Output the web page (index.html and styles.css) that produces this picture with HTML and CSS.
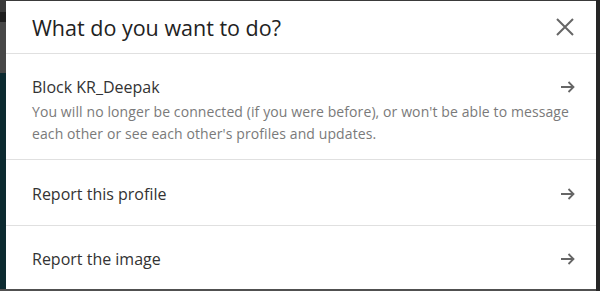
FILE: index.html
```html
<!DOCTYPE html>
<html>
<head>
<meta charset="utf-8">
<link rel="stylesheet" href="styles.css">
</head>
<body>
<div class="modal">
  <div class="header">
    <h2 class="title">What do you want to do?</h2>
    <button class="close" aria-label="Dismiss">
      <svg width="18" height="18" viewBox="0 0 18 18"><path d="M1 1 L17 17 M17 1 L1 17" stroke="#666" stroke-width="2" fill="none"/></svg>
    </button>
  </div>
  <ul class="options">
    <li class="option option-block">
      <div class="row">
        <div class="label">Block KR_Deepak</div>
        <svg class="arrow" width="14" height="12" viewBox="0 0 14 12"><path d="M0 6 H12.5 M7.5 1 L12.5 6 L7.5 11" stroke="#666" stroke-width="1.8" fill="none"/></svg>
      </div>
      <div class="desc">You will no longer be connected (if you were before), or won't be able to message each other or see each other's profiles and updates.</div>
    </li>
    <li class="option">
      <div class="row">
        <div class="label">Report this profile</div>
        <svg class="arrow" width="14" height="12" viewBox="0 0 14 12"><path d="M0 6 H12.5 M7.5 1 L12.5 6 L7.5 11" stroke="#666" stroke-width="1.8" fill="none"/></svg>
      </div>
    </li>
    <li class="option">
      <div class="row">
        <div class="label">Report the image</div>
        <svg class="arrow" width="14" height="12" viewBox="0 0 14 12"><path d="M0 6 H12.5 M7.5 1 L12.5 6 L7.5 11" stroke="#666" stroke-width="1.8" fill="none"/></svg>
      </div>
    </li>
  </ul>
</div>
</body>
</html>
```
FILE: styles.css
```css
html, body {
  margin: 0;
  padding: 0;
  height: 291px;
  overflow: hidden;
}
body {
  background:
    linear-gradient(to right, transparent 0, transparent 596px, #262626 596px),
    linear-gradient(to bottom, transparent 0, transparent 289px, #505050 289px),
    linear-gradient(to bottom, #3a3a3a 0, #3a3a3a 12px, #1e1e1e 12px, #1e1e1e 22px, #474747 22px, #474747 73px, #0c2a30 73px, #0c2a30 100%);
  font-family: "Open Sans", "Noto Sans", sans-serif;
  padding: 1px 4px 2px 6px;
  box-sizing: border-box;
}
.modal {
  background: #fff;
  width: 590px;
  height: 288px;
  overflow: hidden;
  display: flex;
  flex-direction: column;
}
.header {
  flex: none;
  height: 52px;
  border-bottom: 1px solid #e0e0e0;
  display: flex;
  align-items: center;
  justify-content: space-between;
  padding: 0 22px 0 26px;
}
.title {
  margin: 0;
  font-weight: 400;
  font-size: 21.5px;
  color: #222;
}
.close {
  border: 0;
  background: none;
  padding: 0;
  width: 18px;
  height: 18px;
  display: flex;
}
.options {
  flex: none;
  list-style: none;
  margin: 0;
  padding: 0;
}
.option {
  display: flex;
  flex-direction: column;
  justify-content: center;
  padding: 2px 21px 0 26px;
  height: 66px;
  box-sizing: border-box;
  border-bottom: 1px solid #e0e0e0;
}
.option:last-child {
  border-bottom: 0;
  height: 64px;
}
.option-block {
  height: 106px;
  justify-content: flex-start;
  padding-top: 21px;
}
.row {
  display: flex;
  align-items: center;
  justify-content: space-between;
}
.label {
  font-size: 16px;
  color: #333;
  line-height: 24px;
}
.desc {
  margin-top: 2px;
  font-size: 14px;
  color: #7a7a7a;
  line-height: 22px;
  letter-spacing: 0.1px;
}
.arrow {
  flex: none;
}
```
